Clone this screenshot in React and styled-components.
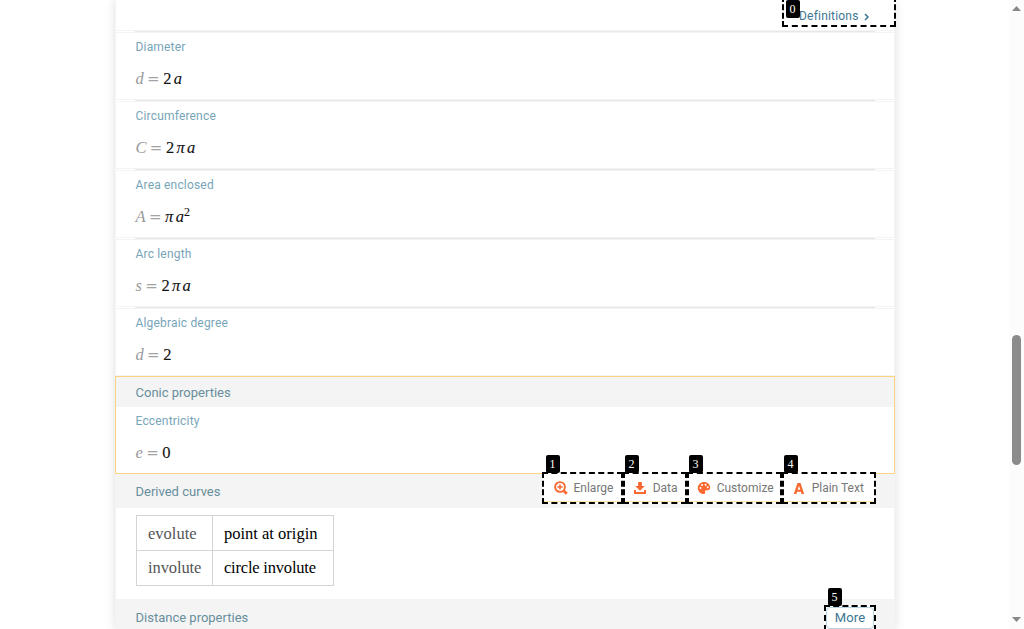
import React from 'react';
import styled, { createGlobalStyle } from 'styled-components';

const Global = createGlobalStyle`
  * { box-sizing: border-box; }
  html, body { margin: 0; height: 629px; overflow: hidden; background: #fff; }
  body { font-family: Roboto, "Liberation Sans", sans-serif; }
`;
const Page = styled.div`
  display: grid; grid-template-columns: 780px 15px; justify-content: space-between;
  width: 1024px; height: 629px; padding-left: 115px; overflow: hidden;
`;
const Card = styled.main`
  height: 629px; background: #fff; box-shadow: 0 0 10px rgba(0, 0, 0, 0.13);
`;
const TopPod = styled.section`
  height: 31px; border: 1px solid #f4f4f4; border-top: 0;
  display: flex; justify-content: flex-end; align-items: flex-start;
`;
const Rule = styled.hr`
  height: 1px; margin: 0 20px; border: 0; background: #e8e8e8;
`;
const Pod = styled.section`
  height: 68px; padding: 5px 19.5px 0; border: 1px solid #f4f4f4;
  display: flex; flex-direction: column; gap: 11px;
`;
const Label = styled.h3`
  margin: 0; height: 18px; font-size: 12px; line-height: 18px; font-weight: 400;
  letter-spacing: 0.18px; color: #77a5b8;
`;
const Formula = styled.div`
  display: flex; align-items: baseline; gap: 3.3px; height: 24px; line-height: 24px; color: #111;
  font-family: "Liberation Serif", serif; font-size: 16.5px; -webkit-text-stroke: 0.1px;
`;
const Variable = styled.i`color: #999; -webkit-text-stroke: 0;`;
const Equals = styled.span`
  color: #a3a3a3; font: 15px/24px "DejaVu Sans", sans-serif; -webkit-text-stroke: 0;
`;
const Terms = styled.span`
  display: flex; align-items: baseline; gap: 2.3px; margin-left: 0.3px;
  sup { font-size: 12px; line-height: 0; vertical-align: 6px; }
`;
const ActivePod = styled.section`
  height: 98px; border: 1px solid #ffd27f;
`;
const ActiveBody = styled.div`
  display: flex; flex-direction: column; gap: 11px; padding: 5px 19.5px 0;
`;
const Heading = styled.h2`
  display: flex; justify-content: space-between; position: relative;
  margin: 0; height: ${p => p.$h}px; padding: 0 20px 0 ${p => p.$pad || 20.5}px; line-height: ${p => p.$line}px;
  font-size: 13px; font-weight: 400; letter-spacing: 0;
  background: #f4f4f4; color: #678e9c;
`;
const TablePod = styled.section`
  height: 91px; padding: 7px 20px; border: 1px solid #f4f4f4; border-width: 0 1px;
`;
const Table = styled.table`
  width: 198px; height: 71px; border-collapse: collapse; table-layout: fixed;
  font: 16.5px/20px "Liberation Serif", serif;
`;
const Cell = styled.td`
  height: 35px; padding: ${p => (p.$track ? 0 : 2)}px 0 0 11px; border: 1px solid #d4d4d4; white-space: nowrap;
  width: ${p => (p.$name ? '76px' : 'auto')}; color: ${p => (p.$name ? '#555' : '#000')};
  letter-spacing: ${p => p.$track || 0}px;
`;
const Outlined = styled.div`
  position: relative; display: flex; align-items: center; width: ${p => p.$w}px;
  border: 2px dashed #000; background: #fff; white-space: nowrap;
  font-size: 12px; line-height: 18px;
`;
const Definitions = styled(Outlined)`
  height: 31px; margin: -4px -2px 0 0; padding: 9px 0 0 15px; color: #3c7693; letter-spacing: 0.2px;
  svg { margin: 1px 0 0 5px; }
`;
const Toolbar = styled.div`
  position: absolute; right: 19px; top: -2px; height: 32px; display: flex;
`;
const Action = styled(Outlined)`
  gap: 6px; padding-left: ${p => p.$pad || 7.7}px; color: #777; letter-spacing: 0;
  box-shadow: inset 0 -1px #ffe3ad;
  svg { width: 14px; height: 14px; flex: none; color: #f96932; }
`;
const MoreFrame = styled(Outlined)`
  height: 26px; margin: 6px -1px 0 0;
`;
const More = styled.span`
  width: 48px; height: 22px; border: 1px solid #b9d2df; border-radius: 4px; flex: none; background: #fff;
  text-align: center; line-height: 20px; font-size: 13px; letter-spacing: 0.1px; color: #3c7693;
`;
const Badge = styled.span`
  position: absolute; left: ${p => p.$x || 0}px; top: ${p => p.$y || -19}px; width: 14px; height: 18px;
  border-radius: 2px; background: #000; color: #fff; text-align: center; letter-spacing: 0; padding-right: 1px;
  font: 12px/18px "Liberation Serif", serif;
`;
const Scrollbar = styled.div`
  background: #fcfcfc; display: flex; flex-direction: column; align-items: center;
  svg { display: block; flex: none; }
`;
const Thumb = styled.div`
  width: 9px; height: 130px; margin: 324px 0 151px; border-radius: 5px; background: #8b8b8b; flex: none;
`;

const ZoomIcon = () => (
  <svg viewBox="0 0 14 14" fill="none" stroke="currentColor">
    <circle cx="6" cy="6" r="4.9" strokeWidth="1.9" />
    <path d="M6 3.400v5.200M3.400 6h5.200" strokeWidth="1.6" />
    <path d="M9.400 9.400l3.400 3.400" strokeWidth="2.700" />
  </svg>
);
const DownloadIcon = () => (
  <svg viewBox="0 0 14 14" fill="currentColor">
    <path d="M5.100 1h3.800v4h2.900L7 9.700 2.200 5h2.900zM1 9h2v2h8V9h2v4H1z" />
  </svg>
);
const PaletteIcon = () => (
  <svg viewBox="0 0 14 14" fill="currentColor">
    <path fillRule="evenodd" d="M7 1C3.600 1 .8 3.700.8 7s2.600 6 6 6c1.200 0 1.700-.8 1.400-1.700-.5-1.300.1-2.100 1.300-2.100h1.400c1.400 0 2.300-1 2.300-2.400C13.200 3.400 10.400 1 7 1zM3.500 6a1 1 0 1 1 0 2 1 1 0 0 1 0-2zM5 3a1 1 0 1 1 0 2 1 1 0 0 1 0-2zM8.600 2.800a1 1 0 1 1 0 2 1 1 0 0 1 0-2zM10.700 5.200a1 1 0 1 1 0 2 1 1 0 0 1 0-2z" />
  </svg>
);
const LetterIcon = () => (
  <svg viewBox="0 0 14 14" fill="currentColor">
    <path fillRule="evenodd" d="M5.500 2h3L12.200 13H9.600l-.7-2.300H5.100L4.400 13H1.800zM7 4.700L5.700 8.700h2.600z" />
  </svg>
);

const pods = [
  ['Diameter', 'd', <>2<i>a</i></>],
  ['Circumference', 'C', <>2<i>π</i><i>a</i></>],
  ['Area enclosed', 'A', <><i>π</i><span><i>a</i><sup>2</sup></span></>],
  ['Arc length', 's', <>2<i>π</i><i>a</i></>],
  ['Algebraic degree', 'd', <>2</>],
];

const Equation = ({ left, children }) => (
  <Formula><Variable>{left}</Variable><Equals>=</Equals><Terms>{children}</Terms></Formula>
);

export default function App() {
  return (
    <Page>
      <Global />
      <Card>
        <TopPod>
          <Definitions $w={114}>Definitions
            <svg width="6" height="8" fill="none" stroke="currentColor" strokeWidth="1.5"><path d="M1 1l3 3-3 3" /></svg>
            <Badge $x={2} $y={2}>0</Badge>
          </Definitions>
        </TopPod>
        {pods.map(([title, left, right]) => (
          <React.Fragment key={title}>
            <Rule />
            <Pod><Label>{title}</Label><Equation left={left}>{right}</Equation></Pod>
          </React.Fragment>
        ))}
        <ActivePod>
          <Heading $h={30} $line={31} $pad={19.5}>Conic properties</Heading>
          <ActiveBody>
            <Label>Eccentricity</Label>
            <Equation left="e">0</Equation>
          </ActiveBody>
        </ActivePod>
        <Heading $h={34} $line={36}>Derived curves
          <Toolbar>
            <Action $w={81} $pad={9.5}><ZoomIcon />Enlarge<Badge $x={2}>1</Badge></Action>
            <Action $w={64}><DownloadIcon />Data<Badge>2</Badge></Action>
            <Action $w={95}><PaletteIcon />Customize<Badge>3</Badge></Action>
            <Action $w={94}><LetterIcon />Plain Text<Badge>4</Badge></Action>
          </Toolbar>
        </Heading>
        <TablePod>
          <Table><tbody>
            <tr><Cell $name>evolute</Cell><Cell>point at origin</Cell></tr>
            <tr><Cell $name $track={-0.1}>involute</Cell><Cell $track={-0.2}>circle involute</Cell></tr>
          </tbody></Table>
        </TablePod>
        <Heading $h={30} $line={37}>Distance properties
          <MoreFrame $w={52}><More>More</More><Badge $x={2}>5</Badge></MoreFrame>
        </Heading>
      </Card>
      <Scrollbar>
        <svg width="11" height="11"><path d="M1 11L5.500 6l4.500 5z" fill="#888" /></svg>
        <Thumb />
        <svg width="11" height="6"><path d="M1 1h9L5.500 6z" fill="#888" /></svg>
      </Scrollbar>
    </Page>
  );
}
